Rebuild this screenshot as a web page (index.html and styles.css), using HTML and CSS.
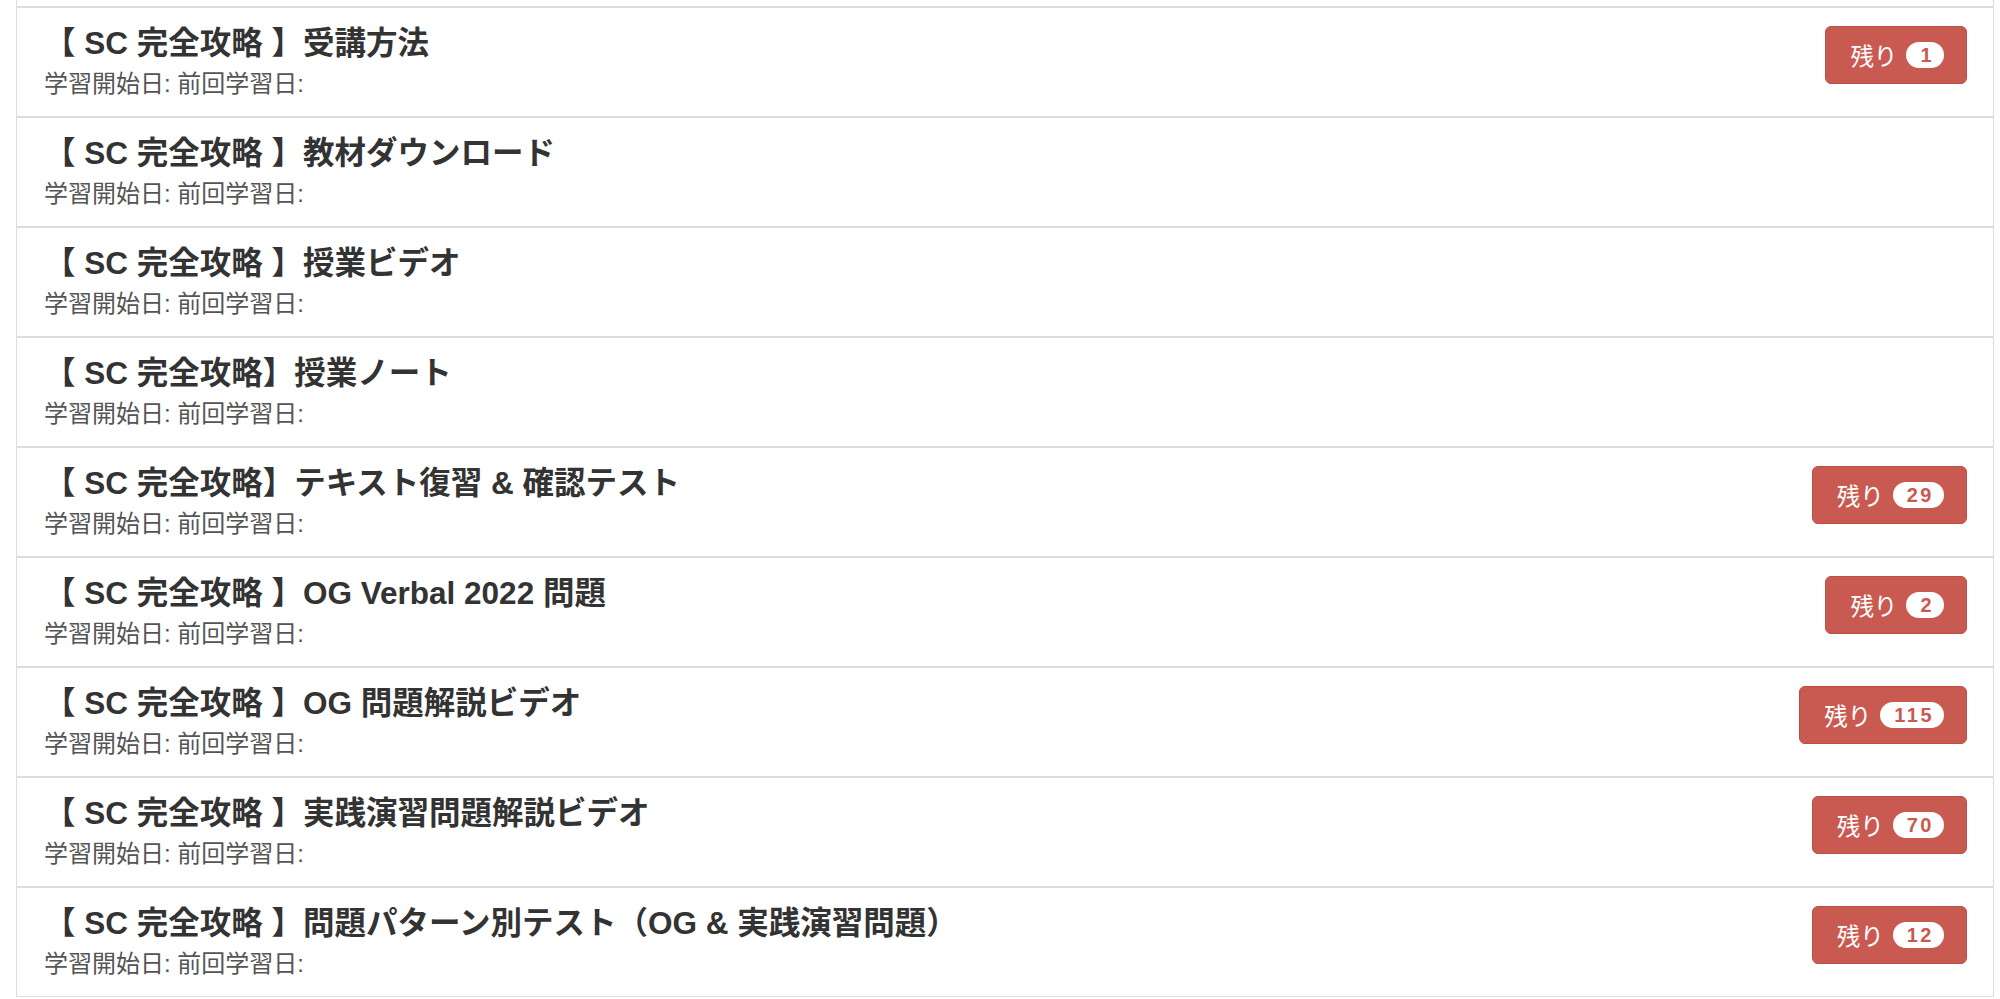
FILE: index.html
```html
<!DOCTYPE html>
<html lang="ja">
    <head>
        <meta charset="UTF-8">
        <title>SC 完全攻略</title>
        <link rel="stylesheet" href="styles.css">
    </head>
    <body>

        <ul class="lessons">
            <li class="lesson">
                <div class="lesson-info">
                    <h4 class="lesson-title">【 SC 完全攻略 】受講方法</h4>
                    <p class="lesson-dates">学習開始日: 前回学習日:</p>
                </div>
                <a class="btn-remain" href="#">残り <span class="count">1</span></a>
            </li>
            <li class="lesson">
                <div class="lesson-info">
                    <h4 class="lesson-title">【 SC 完全攻略 】教材ダウンロード</h4>
                    <p class="lesson-dates">学習開始日: 前回学習日:</p>
                </div>
            </li>
            <li class="lesson">
                <div class="lesson-info">
                    <h4 class="lesson-title">【 SC 完全攻略 】授業ビデオ</h4>
                    <p class="lesson-dates">学習開始日: 前回学習日:</p>
                </div>
            </li>
            <li class="lesson">
                <div class="lesson-info">
                    <h4 class="lesson-title">【 SC 完全攻略】授業ノート</h4>
                    <p class="lesson-dates">学習開始日: 前回学習日:</p>
                </div>
            </li>
            <li class="lesson">
                <div class="lesson-info">
                    <h4 class="lesson-title">【 SC 完全攻略】テキスト復習 &amp; 確認テスト</h4>
                    <p class="lesson-dates">学習開始日: 前回学習日:</p>
                </div>
                <a class="btn-remain" href="#">残り <span class="count">29</span></a>
            </li>
            <li class="lesson">
                <div class="lesson-info">
                    <h4 class="lesson-title">【 SC 完全攻略 】OG Verbal 2022 問題</h4>
                    <p class="lesson-dates">学習開始日: 前回学習日:</p>
                </div>
                <a class="btn-remain" href="#">残り <span class="count">2</span></a>
            </li>
            <li class="lesson">
                <div class="lesson-info">
                    <h4 class="lesson-title">【 SC 完全攻略 】OG 問題解説ビデオ</h4>
                    <p class="lesson-dates">学習開始日: 前回学習日:</p>
                </div>
                <a class="btn-remain" href="#">残り <span class="count">115</span></a>
            </li>
            <li class="lesson">
                <div class="lesson-info">
                    <h4 class="lesson-title">【 SC 完全攻略 】実践演習問題解説ビデオ</h4>
                    <p class="lesson-dates">学習開始日: 前回学習日:</p>
                </div>
                <a class="btn-remain" href="#">残り <span class="count">70</span></a>
            </li>
            <li class="lesson">
                <div class="lesson-info">
                    <h4 class="lesson-title">【 SC 完全攻略 】問題パターン別テスト（OG &amp; 実践演習問題）</h4>
                    <p class="lesson-dates">学習開始日: 前回学習日:</p>
                </div>
                <a class="btn-remain" href="#">残り <span class="count">12</span></a>
            </li>
        </ul>

    </body>
</html>
```

FILE: styles.css
```css
* {
    margin: 0;
    padding: 0;
    box-sizing: border-box;
}
body {
    background: #FFF;
    color: #333;
    font-family: "Liberation Sans", "Noto Sans CJK JP", sans-serif;
}
a {
    text-decoration: none;
}

/* list */
.lessons {
    list-style: none;
    margin: 0 6px 0 16px;
    padding-top: 6px;
    border-left: 1px solid #DDD;
    border-right: 1px solid #DDD;
    border-bottom: 1px solid #DDD;
}
.lesson {
    display: flex;
    justify-content: space-between;
    align-items: flex-start;
    height: 110px;
    padding: 16px 26px 0 27px;
    border-top: 2px solid #DDD;
}
.lesson-title {
    font-size: 31.5px;
    line-height: 38px;
    font-weight: bold;
    color: #333;
}
.lesson-dates {
    margin-top: 7px;
    font-size: 24px;
    line-height: 30px;
    color: #555;
}

/* remaining button */
.btn-remain {
    display: flex;
    align-items: center;
    gap: 9px;
    height: 58px;
    margin-top: 2px;
    padding: 0 22px 0 24px;
    background: #C95A51;
    border: 1px solid #BE4D45;
    border-radius: 6px;
    color: #FFF;
    font-size: 23.5px;
}
.count {
    display: inline-block;
    height: 26px;
    padding: 0 10px 0 14px;
    background: #FFF;
    border-radius: 13px;
    color: #C95A51;
    font-size: 20px;
    line-height: 26px;
    font-weight: bold;
    letter-spacing: 2.5px;
}
```
